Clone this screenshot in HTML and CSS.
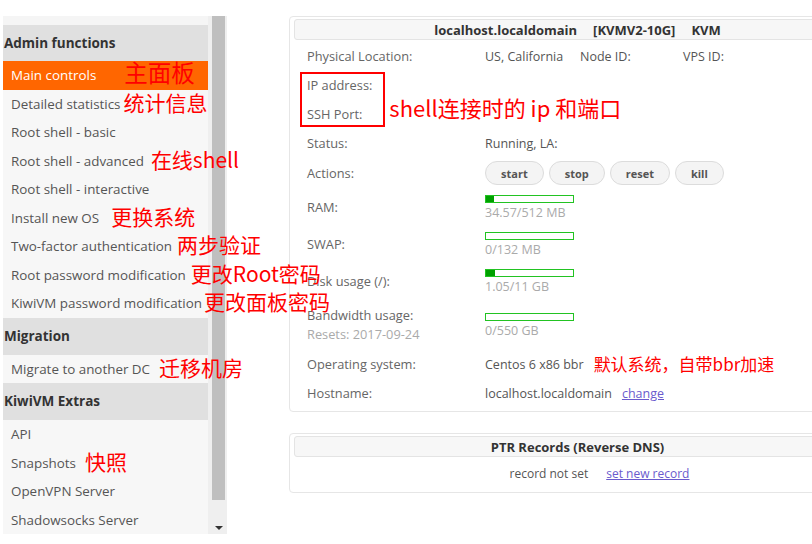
FILE: index.html
```html
<!DOCTYPE html>
<html>
<head>
<meta charset="utf-8">
<link rel="stylesheet" href="styles.css">
</head>
<body>
<div class="page">
  <aside class="sidebar">
    <nav class="menu">
      <div class="top-gap"></div>
      <div class="menu-head first">Admin functions</div>
      <div class="item active">Main controls<span class="note note-big">主面板</span></div>
      <div class="item">Detailed statistics<span class="note m3">统计信息</span></div>
      <div class="item">Root shell - basic</div>
      <div class="item">Root shell - advanced<span class="note m7">在线shell</span></div>
      <div class="item">Root shell - interactive</div>
      <div class="item">Install new OS<span class="note m12">更换系统</span></div>
      <div class="item">Two-factor authentication<span class="note m5">两步验证</span></div>
      <div class="item">Root password modification<span class="note m5">更改Root密码</span></div>
      <div class="item">KiwiVM password modification<span class="note m2">更改面板密码</span></div>
      <div class="menu-head">Migration</div>
      <div class="item">Migrate to another DC<span class="note m9">迁移机房</span></div>
      <div class="menu-head">KiwiVM Extras</div>
      <div class="item">API</div>
      <div class="item">Snapshots<span class="note m9">快照</span></div>
      <div class="item">OpenVPN Server</div>
      <div class="item">Shadowsocks Server</div>
    </nav>
    <div class="scrollbar">
      <div class="thumb"></div>
      <div class="arrow"></div>
    </div>
  </aside>

  <main class="content">
    <section class="panel">
      <div class="panel-head"><span>localhost.localdomain</span><span>[KVMV2-10G]</span><span>KVM</span></div>
      <div class="row">
        <div class="lbl">Physical Location:</div>
        <div class="val"><span class="c1">US, California</span><span class="c2">Node ID:</span><span>VPS ID:</span></div>
      </div>
      <div class="boxed">
        <div class="row">
          <div class="lbl">IP address:</div>
          <div class="val"></div>
        </div>
        <div class="row">
          <div class="lbl">SSH Port:<span class="note main-note">shell连接时的 ip 和端口</span></div>
          <div class="val"></div>
        </div>
        <div class="redbox"></div>
      </div>
      <div class="row">
        <div class="lbl">Status:</div>
        <div class="val">Running, LA:</div>
      </div>
      <div class="row row-actions">
        <div class="lbl">Actions:</div>
        <div class="val btns">
          <button class="btn">start</button>
          <button class="btn">stop</button>
          <button class="btn">reset</button>
          <button class="btn">kill</button>
        </div>
      </div>
      <div class="row row-bar">
        <div class="lbl">RAM:</div>
        <div class="val">
          <div class="bar"><div class="fill" style="width:9%"></div></div>
          <div class="bar-text">34.57/512 MB</div>
        </div>
      </div>
      <div class="row row-bar">
        <div class="lbl">SWAP:</div>
        <div class="val">
          <div class="bar"></div>
          <div class="bar-text">0/132 MB</div>
        </div>
      </div>
      <div class="row row-bar">
        <div class="lbl">Disk usage (/):</div>
        <div class="val">
          <div class="bar"><div class="fill" style="width:10%"></div></div>
          <div class="bar-text">1.05/11 GB</div>
        </div>
      </div>
      <div class="row row-bar row-bw">
        <div class="lbl">Bandwidth usage:<div class="sub">Resets: 2017-09-24</div></div>
        <div class="val">
          <div class="bar"></div>
          <div class="bar-text">0/550 GB</div>
        </div>
      </div>
      <div class="row">
        <div class="lbl">Operating system:</div>
        <div class="val">Centos 6 x86 bbr<span class="note os-note">默认系统，自带bbr加速</span></div>
      </div>
      <div class="row">
        <div class="lbl">Hostname:</div>
        <div class="val">localhost.localdomain<a class="link host-link" href="#">change</a></div>
      </div>
    </section>

    <section class="panel ptr">
      <div class="panel-head">PTR Records (Reverse DNS)</div>
      <div class="ptr-row">record not set<a class="link ptr-link" href="#">set new record</a></div>
    </section>
  </main>
</div>
</body>
</html>
```

FILE: styles.css
```css
html, body {
  margin: 0;
  padding: 0;
  background: #ffffff;
}
body {
  width: 812px;
  height: 544px;
  overflow: hidden;
  font-family: "Open Sans", "Noto Sans", sans-serif;
  font-size: 12.5px;
  color: #555;
}
.page {
  display: flex;
  align-items: flex-start;
  padding-top: 16px;
}

/* Sidebar */
.sidebar {
  display: flex;
  margin-left: 3px;
  height: 518px;
}
.menu {
  width: 205px;
  background: #f7f7f7;
  display: flex;
  flex-direction: column;
}
.top-gap {
  height: 9px;
  background: #f5f5f5;
}
.menu-head {
  height: 37px;
  line-height: 37px;
  background: #e0e0e0;
  font-weight: bold;
  font-size: 13.5px;
  color: #333;
  padding-left: 1px;
  white-space: nowrap;
}
.menu-head.first { height: 36px; line-height: 36px; }
.item {
  height: 28.5px;
  line-height: 28.5px;
  padding-left: 8px;
  white-space: nowrap;
  font-size: 13.4px;
  color: #555;
  position: relative;
  z-index: 2;
}
.item.active {
  background: #ff6600;
  color: #ffffff;
}
.note {
  font-family: "Noto Sans CJK SC", "Noto Sans", sans-serif;
  color: #ff0000;
  font-size: 21px;
  line-height: 0;
  white-space: nowrap;
  vertical-align: -2px;
}
.note-big { font-size: 23.5px; margin-left: 28px; }
.m2 { margin-left: 2px; }
.m3 { margin-left: 3px; }
.m5 { margin-left: 5px; }
.m7 { margin-left: 7px; }
.m9 { margin-left: 9px; }
.m12 { margin-left: 12px; }

.scrollbar {
  width: 13px;
  padding: 0 2px 0 4px;
  background: #efefef;
  display: flex;
  flex-direction: column;
  align-items: center;
  position: relative;
  z-index: 1;
}
.scrollbar .thumb {
  width: 13px;
  height: 484px;
  background: #bfbfbf;
}
.scrollbar .arrow {
  margin-top: auto;
  margin-bottom: 4px;
  width: 0;
  height: 0;
  border-left: 4px solid transparent;
  border-right: 4px solid transparent;
  border-top: 4px solid #333;
}

/* Content */
.content {
  margin-left: 62px;
  display: flex;
  flex-direction: column;
  gap: 21px;
}
.panel {
  width: 577px;
  border: 1px solid #e6e6e6;
  border-radius: 4px;
  padding: 2px 4px 3px 4px;
  box-sizing: border-box;
}
.panel-head {
  height: 21px;
  box-sizing: border-box;
  background: #f7f7f7;
  border: 1px solid #e4e4e4;
  border-radius: 3px;
  display: flex;
  justify-content: center;
  gap: 16px;
  align-items: center;
  font-weight: bold;
  font-size: 13px;
  color: #333;
  margin-bottom: 2px;
}
.row {
  display: flex;
  align-items: center;
  padding: 5px 0 5px 13px;
  line-height: 19px;
}
.row:first-of-type { }
.lbl {
  width: 178px;
  flex: none;
  white-space: nowrap;
  color: #666;
  font-size: 12.8px;
}
.val {
  white-space: nowrap;
  color: #555;
}
.c1 { display: inline-block; width: 95px; }
.c2 { display: inline-block; width: 103px; }

.boxed { position: relative; }
.redbox {
  position: absolute;
  left: 6px;
  top: 1px;
  width: 81px;
  height: 51px;
  border: 2px solid #ff0000;
}
.main-note {
  font-size: 22px;
  margin-left: 27px;
  vertical-align: 2px;
}

.row-actions { padding: 3px 0 4px 13px; }
.btns { display: flex; gap: 5px; }
.btn {
  height: 24px;
  padding: 0 15px;
  border: 1px solid #dcdcdc;
  border-radius: 12px;
  background: #f4f4f4;
  font-family: "Open Sans", "Noto Sans", sans-serif;
  font-weight: bold;
  font-size: 11px;
  color: #555;
}

.row-bar { padding: 5px 0 5px 13px; }
.row-bw { padding: 6px 0 6px 13px; }
.bar {
  width: 89px;
  height: 8px;
  box-sizing: border-box;
  border: 1px solid #22c322;
  margin-top: 1px;
  display: flex;
}
.fill {
  background: #00a000;
  height: 100%;
}
.bar-text {
  color: #aaa;
  line-height: 17px;
  margin-top: 1px;
}
.sub { color: #aaa; }

.os-note { margin-left: 10px; font-size: 17px; }
.link {
  color: #6a5acd;
  text-decoration: underline;
}
.host-link { margin-left: 10px; }

.ptr { padding-bottom: 3px; }
.ptr-row {
  text-align: center;
  padding: 5px 0 6px 44px;
  line-height: 19px;
  font-size: 12px;
}
.ptr-link { margin-left: 18px; }
```
